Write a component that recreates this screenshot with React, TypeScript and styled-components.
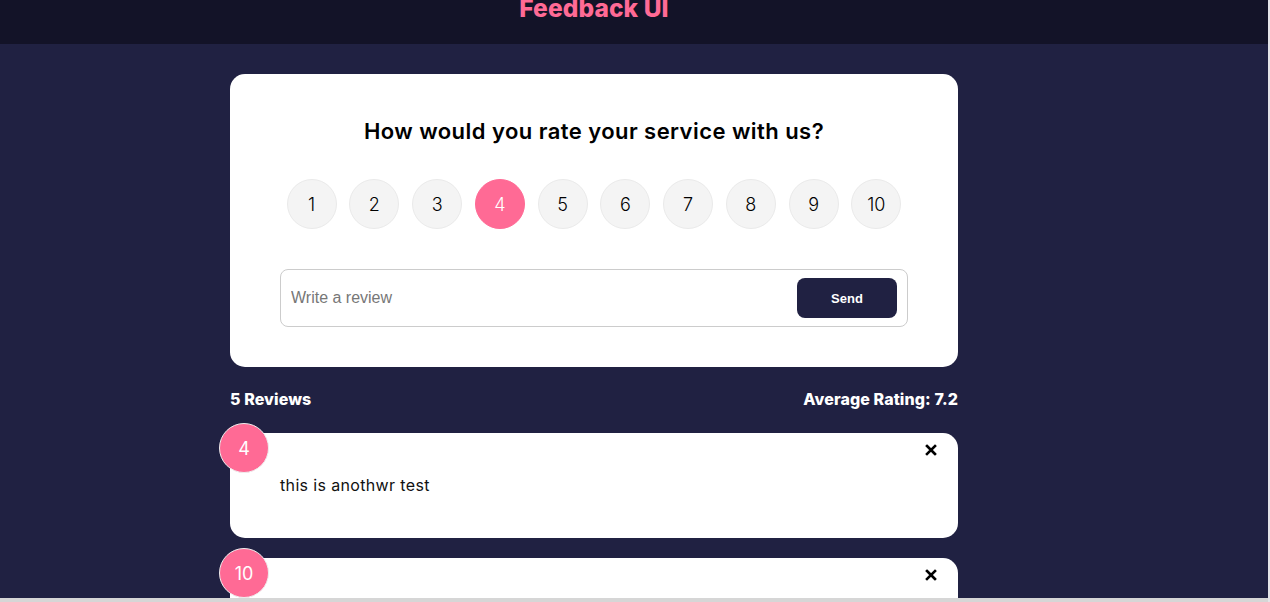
import React, { useState } from 'react';
import styled, { createGlobalStyle } from 'styled-components';

const GlobalStyle = createGlobalStyle`
  * { box-sizing: border-box; }
  html, body { margin: 0; padding: 0; }
  body {
    background: #202142;
    font-family: "Inter", "Noto Sans", sans-serif;
    color: #000;
    overflow: hidden;
  }
`;

const Header = styled.header`
  height: 44px;
  background: #131328;
  overflow: hidden;
`;

const HeaderInner = styled.div`
  width: 1188px;
  display: flex;
  justify-content: center;
`;

const Title = styled.h2`
  margin: -7px 0 0;
  font-size: 24.5px;
  line-height: 30px;
  font-weight: 800;
  color: #ff6a95;
  letter-spacing: 0.1px;
`;

const Page = styled.main`
  width: 1188px;
  display: flex;
  justify-content: center;
  padding-top: 30px;
`;

const Column = styled.div`
  width: 728px;
  display: flex;
  flex-direction: column;
`;

const Card = styled.div`
  position: relative;
  background: #fff;
  border-radius: 15px;
  padding: 40px 50px 41px;
  min-height: 105px;
`;

const FormCard = styled(Card)`
  padding: 40px 50px;
`;

const Heading = styled.h2`
  margin: 0;
  text-align: center;
  font-size: 22px;
  line-height: 34px;
  font-weight: 600;
  letter-spacing: 0.45px;
  color: #000;
`;

const RatingRow = styled.ul`
  list-style: none;
  margin: 31px 0 40px;
  padding: 0;
  display: flex;
  justify-content: center;
  gap: 12.75px;
`;

const RatingItem = styled.li<{ $selected: boolean }>`
  width: 50px;
  height: 50px;
  border-radius: 50%;
  display: flex;
  align-items: center;
  justify-content: center;
  font-size: 18px;
  font-weight: 300;
  background: ${(p) => (p.$selected ? '#ff6a95' : '#f4f4f4')};
  color: ${(p) => (p.$selected ? '#fff' : '#000')};
  border: 1px solid ${(p) => (p.$selected ? '#ff6a95' : '#eaeaea')};
  cursor: pointer;
`;

const InputGroup = styled.div`
  display: flex;
  align-items: center;
  height: 58px;
  border: 1px solid #ccc;
  border-radius: 8px;
  padding: 8px 10px;
`;

const Input = styled.input`
  flex: 1;
  border: none;
  outline: none;
  font-family: "Liberation Sans", Arial, sans-serif;
  font-size: 16px;
  color: #333;
  padding: 0;
  &::placeholder { color: #777; }
`;

const SendButton = styled.button`
  width: 100px;
  height: 40px;
  border: none;
  border-radius: 8px;
  background: #202142;
  color: #fff;
  font-family: "Liberation Sans", Arial, sans-serif;
  font-size: 13px;
  font-weight: 600;
  cursor: pointer;
`;

const Stats = styled.div`
  display: flex;
  justify-content: space-between;
  margin: 20px 0 22px;
  color: #fff;
  font-size: 16px;
  line-height: 24px;
  font-weight: 800;
  letter-spacing: 0.1px;
`;

const ReviewList = styled.div`
  display: flex;
  flex-direction: column;
  gap: 20px;
`;

const Badge = styled.div`
  position: absolute;
  top: -10px;
  left: -11px;
  width: 50px;
  height: 50px;
  border-radius: 50%;
  background: #ff6a95;
  border: 1px solid #eee;
  color: #fff;
  display: flex;
  align-items: center;
  justify-content: center;
  font-size: 18px;
  font-weight: 400;
`;

const CloseButton = styled.button`
  position: absolute;
  top: 10px;
  right: 20px;
  width: 14px;
  height: 14px;
  padding: 0;
  border: none;
  background: none;
  display: flex;
  align-items: center;
  justify-content: center;
  cursor: pointer;
`;

const ReviewText = styled.div`
  font-size: 16px;
  line-height: 24px;
  font-weight: 400;
  letter-spacing: 0.35px;
  color: #111;
`;

const ScrollbarH = styled.div`
  position: fixed;
  left: 0;
  right: 0;
  bottom: 0;
  height: 4px;
  background: #d6d6d6;
`;

const ScrollbarV = styled.div`
  position: fixed;
  top: 0;
  right: 0;
  bottom: 0;
  width: 2px;
  background: #e4e4e8;
`;

const CloseIcon = () => (
  <svg width="12" height="12" viewBox="0 0 12 12">
    <path d="M2 2 L10 10 M10 2 L2 10" stroke="#000" strokeWidth="2.6" strokeLinecap="square" />
  </svg>
);

const reviews = [
  { id: 1, rating: 4, text: 'this is anothwr test' },
  { id: 2, rating: 10, text: '' },
];

export default function App() {
  const [selected, setSelected] = useState(4);
  return (
    <>
      <GlobalStyle />
      <Header>
        <HeaderInner>
          <Title>Feedback UI</Title>
        </HeaderInner>
      </Header>
      <Page>
        <Column>
          <FormCard>
            <Heading>How would you rate your service with us?</Heading>
            <RatingRow>
              {Array.from({ length: 10 }, (_, i) => i + 1).map((n) => (
                <RatingItem key={n} $selected={n === selected} onClick={() => setSelected(n)}>
                  {n}
                </RatingItem>
              ))}
            </RatingRow>
            <InputGroup>
              <Input placeholder="Write a review" />
              <SendButton>Send</SendButton>
            </InputGroup>
          </FormCard>
          <Stats>
            <span>5 Reviews</span>
            <span>Average Rating: 7.2</span>
          </Stats>
          <ReviewList>
            {reviews.map((r) => (
              <Card key={r.id}>
                <Badge>{r.rating}</Badge>
                <CloseButton aria-label="delete">
                  <CloseIcon />
                </CloseButton>
                {r.text && <ReviewText>{r.text}</ReviewText>}
              </Card>
            ))}
          </ReviewList>
        </Column>
      </Page>
      <ScrollbarH />
      <ScrollbarV />
    </>
  );
}
